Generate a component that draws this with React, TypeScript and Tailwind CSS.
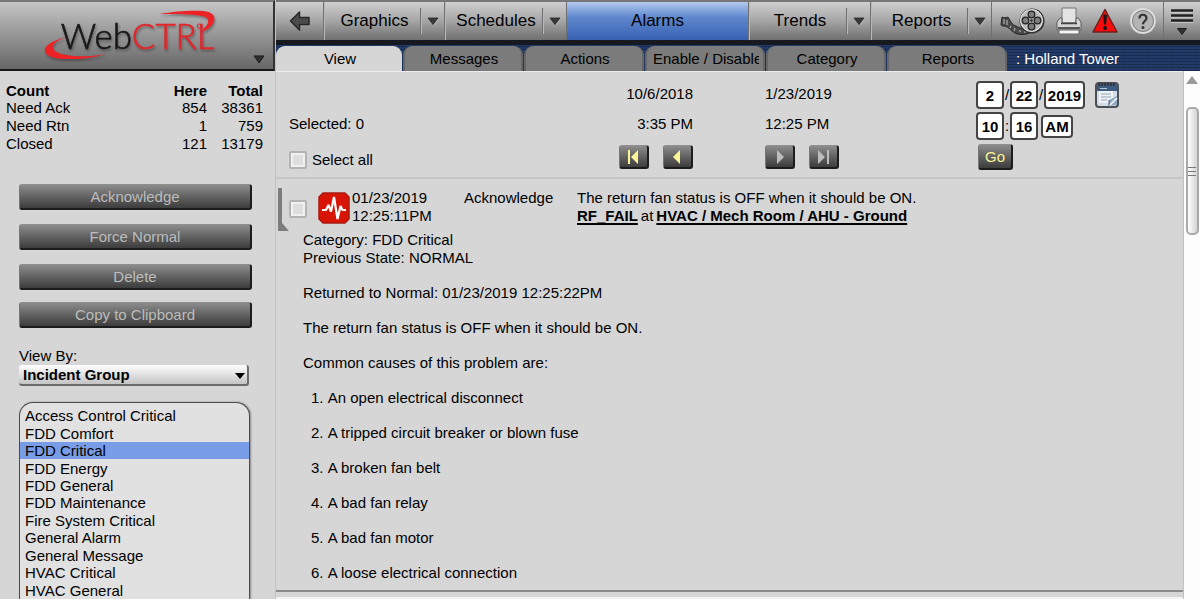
import { useState } from 'react';
import clsx from 'clsx';

const NAV_GRADIENT = 'bg-linear-to-b from-[#cfcfcf] via-[#a5a5a5] to-[#707070]';
const DARK_BUTTON =
  'flex items-center justify-center rounded-[3px] border-t border-r-2 border-b-2 border-l border-t-[#8f8f8f] border-r-[#1c1c1c] border-b-[#1c1c1c] border-l-[#777] bg-linear-to-b from-[#8c8c8c] to-[#3d3d3d]';

const counts = [
  { label: 'Need Ack', here: 854, total: 38361 },
  { label: 'Need Rtn', here: 1, total: 759 },
  { label: 'Closed', here: 121, total: 13179 },
];

const groups = [
  'Access Control Critical',
  'FDD Comfort',
  'FDD Critical',
  'FDD Energy',
  'FDD General',
  'FDD Maintenance',
  'Fire System Critical',
  'General Alarm',
  'General Message',
  'HVAC Critical',
  'HVAC General',
];

const tabs = ['View', 'Messages', 'Actions', 'Enable / Disable', 'Category', 'Reports'];

const causes = [
  'An open electrical disconnect',
  'A tripped circuit breaker or blown fuse',
  'A broken fan belt',
  'A bad fan relay',
  'A bad fan motor',
  'A loose electrical connection',
];

function Caret() {
  return (
    <svg width="12" height="9" viewBox="0 0 12 9" aria-hidden="true">
      <path d="M1 1h10L6 7.5z" fill="#3a3a3a" stroke="#262626" strokeWidth="0.8" />
      <path d="M7 8.5 11.5 2" stroke="#c8c8c8" strokeWidth="0.6" />
    </svg>
  );
}

function Logo() {
  return (
    <svg className="h-full w-full" viewBox="0 0 274 67" aria-label="WebCTRL">
      <defs>
        <filter id="logo-shadow" x="-10%" y="-20%" width="120%" height="150%">
          <feDropShadow dx="1" dy="2" stdDeviation="1" floodColor="#222" floodOpacity="0.45" />
        </filter>
      </defs>
      <g filter="url(#logo-shadow)">
        <path
          d="M66 35C52 39 44 44 45 49c1 6 13 9 27 8 14 0 24-2 35-5-13 2-23 3-33 2-13-1-20-4-21-8-1-4 4-7 13-11z"
          fill="#ec2027"
        />
        <path
          d="M160 12c16-3 34-4 44-3 8 1 12 4 11 9-1 5-6 10-15 13 6-5 9-9 9-12 0-4-5-5-13-6-10-1-22-1-36-1z"
          fill="#ec2027"
        />
        <text x="61" y="47" fontFamily="Lato, 'Open Sans', sans-serif" fontSize="35" fontWeight="300" strokeWidth="0.6">
          <tspan fill="#151515" stroke="#151515">Web</tspan>
          <tspan fill="#e0262c" stroke="#e0262c">CTRL</tspan>
        </text>
        <circle cx="200" cy="24" r="2" fill="none" stroke="#e0262c" strokeWidth="1" />
      </g>
      <path d="M255 54h10l-5 7z" fill="#2f2f2f" stroke="#1d1d1d" />
    </svg>
  );
}

function FilmIcon() {
  return (
    <svg width="46" height="30" viewBox="0 0 46 30" aria-hidden="true">
      <path d="M2 11c2 1 4 1 6 0 2 3 4 8 8 9 5 3 10 4 16 3v3c-9 4-15 3-20-1-3-3-5-5-9-5-1 0-1 0-2-1z" fill="#4a4a4a" stroke="#262626" />
      <path d="M4 13v5M7 14v5M11 20l-1 2M15 22l-1 3M20 24v2M25 25v2" stroke="#a5a5a5" strokeWidth="1.300" />
      <circle cx="32" cy="15" r="12.500" fill="#333" />
      <circle cx="31.500" cy="14.500" r="11" fill="#bdbdbd" stroke="#f2f2f2" />
      <g fill="#7c7c7c" stroke="#222" strokeWidth="1.300">
        <circle cx="31.500" cy="8.500" r="3.300" />
        <circle cx="31.500" cy="20.500" r="3.300" />
        <circle cx="25.500" cy="14.500" r="3.300" />
        <circle cx="37.500" cy="14.500" r="3.300" />
      </g>
      <circle cx="31.500" cy="14.500" r="1.300" fill="#222" />
    </svg>
  );
}

function PrinterIcon() {
  return (
    <svg width="26" height="30" viewBox="0 0 26 30" aria-hidden="true">
      <path d="M6 2h14v15H6z" fill="#e3e3e3" stroke="#777" />
      <path d="M4 12h2v5h14v-5h2l3 4v8H1v-8z" fill="#d4d4d4" stroke="#5a5a5a" />
      <path d="M5 17.500h16" stroke="#444" strokeWidth="1.500" />
      <path d="M2 21h22v2H2z" fill="#555" />
      <path d="M3 24h20v4H3z" fill="#f4f4f4" stroke="#666" />
    </svg>
  );
}

function WarningIcon() {
  return (
    <svg width="28" height="28" viewBox="0 0 28 28" aria-hidden="true">
      <path d="M14 2.500 26 25H2z" fill="#f90b0b" stroke="#6b2020" strokeWidth="1.500" strokeLinejoin="round" />
      <path d="M12 9c0-2 4-2 4 0l-1 8.500h-2z" fill="#171717" />
      <circle cx="14" cy="21" r="2" fill="#171717" />
    </svg>
  );
}

function HelpIcon() {
  return (
    <svg width="28" height="28" viewBox="0 0 28 28" aria-hidden="true">
      <circle cx="14.500" cy="14.500" r="12.500" fill="#555" />
      <circle cx="14" cy="14" r="12" fill="#b4b4b4" stroke="#dedede" strokeWidth="2" />
      <circle cx="14" cy="14" r="10.500" fill="none" stroke="#777" strokeWidth="0.800" />
      <path d="M10.500 11.500c0-5 7-4.800 7-.5 0 3-3.500 3-3.500 6.200" fill="none" stroke="#333" strokeWidth="2.200" />
      <circle cx="14" cy="20.500" r="1.500" fill="#333" />
    </svg>
  );
}

function CalendarIcon() {
  return (
    <svg width="24" height="26" viewBox="0 0 24 26" aria-hidden="true">
      <rect x="1" y="1" width="22" height="24" rx="3" fill="#d3dce5" stroke="#4a4f55" strokeWidth="2" />
      <path d="M2 3.500c0-1 1-2 2-2h16c1 0 2 1 2 2V9H2z" fill="#3c5c80" />
      <path d="M3 2.500h18" stroke="#33383e" strokeWidth="3" strokeDasharray="2 1" />
      <path d="M5 6.500h7" stroke="#b6c8da" />
      <path d="M4 9h14v12H4z" fill="#eef2f5" />
      <path d="M6 12h10M6 15h10M6 18h6" stroke="#b2bfcc" strokeWidth="1.300" />
      <path d="M14 24v-6l8-4v9z" fill="#8fa9c4" />
      <path d="m14 24 8-8" stroke="#fff" strokeWidth="1.500" />
      <path d="M14 18v6" stroke="#3c5c80" />
    </svg>
  );
}

function AlarmIcon() {
  return (
    <svg width="32" height="32" viewBox="0 0 32 32" aria-hidden="true">
      <path d="M5 1h22l4 4v22l-4 4H5l-4-4V5z" fill="#d81406" stroke="#a81b10" strokeWidth="1.500" strokeLinejoin="round" />
      <path
        d="M4 18h4l2.500-5 2.500 6.500L16 5l3.500 22 3-13 2 4H28"
        fill="none"
        stroke="#fff"
        strokeWidth="2.200"
        strokeLinejoin="bevel"
      />
    </svg>
  );
}

function NavItem({ label, className }: { label: string; className: string }) {
  return (
    <div className={clsx('flex items-center border-r border-[#707070] shadow-[inset_1px_0_0_#b8b8b8]', className)}>
      <button className="flex-1 pl-[5px] text-center">{label}</button>
      <button
        aria-label={`${label} menu`}
        className="flex h-[26px] w-6 items-center justify-center border-l border-[#6e6e6e] shadow-[inset_1px_0_0_#bababa]"
      >
        <Caret />
      </button>
    </div>
  );
}

function PageButton({ label, path, disabled }: { label: string; path: string; disabled?: boolean }) {
  return (
    <button aria-label={label} disabled={disabled} className={clsx(DARK_BUTTON, 'h-6 w-[30px]')}>
      <svg width="16" height="16" viewBox="0 0 16 16" aria-hidden="true">
        <path d={path} fill={disabled ? '#bdbdbd' : '#fbf596'} />
      </svg>
    </button>
  );
}

function DateField({ label, value, className }: { label: string; value: string; className: string }) {
  return (
    <input
      aria-label={label}
      defaultValue={value}
      className={clsx('rounded-[4px] border-2 border-[#444] bg-white text-center font-bold', className)}
    />
  );
}

const CHECKBOX =
  'size-[18px] shrink-0 appearance-none rounded-[2px] border-2 border-[#b3b3b3] bg-[#dedede] shadow-[inset_0_0_0_2px_#f1f1f1] checked:bg-[#789ce6]';
const LINK = 'font-bold underline decoration-2 underline-offset-2 [text-decoration-skip-ink:none]';

export default function App() {
  const [tab, setTab] = useState('View');
  const [group, setGroup] = useState('FDD Critical');

  return (
    <div className="flex h-screen overflow-hidden bg-[#d6d6d6] font-['Liberation_Sans',Arial,sans-serif] text-[15px] leading-[18px] text-black">
      {/* Left column */}
      <aside className="flex w-[276px] shrink-0 flex-col border-r border-[#c2c2c2]">
        <button
          aria-label="System menu"
          className="h-[71px] w-full shrink-0 border-t-2 border-r-2 border-b-2 border-t-[#777] border-r-[#333] border-b-[#181818] bg-linear-to-b from-[#c6c6c6] to-[#676767]"
        >
          <Logo />
        </button>

        <table className="mt-[11px] mr-3 ml-[6px] h-[70px] shrink-0 leading-[17px]">
          <thead>
            <tr>
              <th className="p-0 text-left">Count</th>
              <th className="w-16 p-0 text-right">Here</th>
              <th className="w-14 p-0 text-right">Total</th>
            </tr>
          </thead>
          <tbody className="text-right">
            {counts.map(row => (
              <tr key={row.label}>
                <td className="p-0 text-left">{row.label}</td>
                <td className="p-0">{row.here}</td>
                <td className="p-0">{row.total}</td>
              </tr>
            ))}
          </tbody>
        </table>

        <div className="mt-8 flex flex-col gap-[14px] pr-[23px] pl-[19px] text-[#bcbcbc]">
          <button className={clsx(DARK_BUTTON, 'h-[26px]')}>Acknowledge</button>
          <button className={clsx(DARK_BUTTON, 'h-[26px]')}>Force Normal</button>
          <button className={clsx(DARK_BUTTON, 'h-[26px]')}>Delete</button>
        </div>
        <div className="mt-3 flex flex-col pr-[23px] pl-[19px] text-[#bcbcbc]">
          <button className={clsx(DARK_BUTTON, 'h-[26px]')}>Copy to Clipboard</button>
        </div>

        <div className="mt-[19px] flex flex-col pr-[26px] pl-[19px]">
          <label htmlFor="view-by">View By:</label>
          <div className="relative">
            <select
              id="view-by"
              className="h-[21px] w-full appearance-none rounded-[3px] border-r-2 border-b-2 border-[#6b6b6b] bg-linear-to-b from-white to-[#c4c4c4] pl-1 font-bold"
            >
              <option>Incident Group</option>
            </select>
            <svg className="pointer-events-none absolute top-2 right-1" width="10" height="6" aria-hidden="true">
              <path d="M0 0h10L5 6z" fill="#000" />
            </svg>
          </div>
        </div>

        <ul className="mt-4 mr-[25px] ml-[19px] flex min-h-0 flex-1 flex-col rounded-t-[14px] border border-b-0 border-[#4c4c4c] bg-[#e1e1e1] pt-1 shadow-[1px_0_2px_#888]">
          {groups.map(name => (
            <li key={name} className="flex min-h-[17px] flex-1">
              <button
                onClick={() => setGroup(name)}
                className={clsx('w-full pl-[5px] text-left leading-[17px]', group === name && 'bg-[#789ce6]')}
              >
                {name}
              </button>
            </li>
          ))}
        </ul>
      </aside>

      <div className="flex min-w-0 flex-1 flex-col">
        {/* Main navigation */}
        <nav className={clsx('flex h-10 shrink-0 border-t-2 border-[#777] text-[17px]', NAV_GRADIENT)}>
          <button aria-label="Back" className="flex w-12 items-center justify-center border-r border-[#707070]">
            <svg width="22" height="22" viewBox="0 0 22 22" aria-hidden="true">
              <path
                d="M1.500 11 10.500 2v5.500H20v7h-9.500V20z"
                fill="#4b4b4b"
                stroke="#282828"
                strokeWidth="1.500"
                strokeLinejoin="round"
              />
            </svg>
          </button>
          <NavItem label="Graphics" className="w-[121px]" />
          <NavItem label="Schedules" className="w-[122px]" />
          <button className="flex-1 border-r border-[#707070] bg-linear-to-b from-[#b4c9ec] via-[#5f88ce] via-40% to-[#3861b2]">
            Alarms
          </button>
          <NavItem label="Trends" className="w-[122px]" />
          <NavItem label="Reports" className="w-[121px]" />
          <div className="flex w-[172px] items-center justify-between border-r border-[#707070] pr-[6px] pl-2">
            <button aria-label="Trace"><FilmIcon /></button>
            <button aria-label="Print"><PrinterIcon /></button>
            <button aria-label="System alarms"><WarningIcon /></button>
            <button aria-label="Help"><HelpIcon /></button>
          </div>
          <button aria-label="Menu" className="flex w-9 items-center justify-center">
            <svg width="24" height="28" viewBox="0 0 24 28" aria-hidden="true">
              <path d="M1 3.500h22M1 8.500h22M1 13.500h22" stroke="#222" strokeWidth="2.400" />
              <path d="M1 5.500h22M1 10.500h22M1 15.500h22" stroke="#ccc" strokeWidth="0.800" />
              <path d="M7.500 21.500h9l-4.500 6z" fill="#333" stroke="#1d1d1d" />
            </svg>
          </button>
        </nav>

        {/* Tabs */}
        <div className="flex h-[31px] shrink-0 items-end border-t-[5px] border-[#161a20] bg-[#233c6b] bg-[repeating-linear-gradient(0deg,#1a2c50_0_1px,transparent_1px_3px),repeating-linear-gradient(90deg,#1f3660_0_1px,transparent_1px_3px)]">
          {tabs.map(name => (
            <button
              key={name}
              onClick={() => setTab(name)}
              className={clsx(
                'mr-px h-[25px] rounded-t-[9px] border-x-2 pt-px pr-1 pl-[5px] whitespace-nowrap',
                tab === name
                  ? 'w-[126px] border-[#d6d6d6] bg-[#d6d6d6]'
                  : 'w-[120px] border-[#666] bg-[#7b7b7b]'
              )}
            >
              <span className="block overflow-hidden pl-px">{name}</span>
            </button>
          ))}
          <h1 className="self-center pt-px pl-2 text-white">: Holland Tower</h1>
        </div>

        <div className="flex min-h-0 flex-1">
          <main className="min-w-0 flex-1 overflow-hidden border-t border-[#ececec]">
            {/* Filter bar */}
            <section className="flex h-[107px] border-b-2 border-[#c6c6c6] pl-[13px]">
              <div className="flex w-[330px] flex-col justify-end gap-[18px] pb-2">
                <p>Selected: 0</p>
                <label className="flex items-center gap-[5px]">
                  <input type="checkbox" className={CHECKBOX} />
                  Select all
                </label>
              </div>
              <div className="flex w-[74px] flex-col items-end gap-3 pt-[13px]">
                <span>10/6/2018</span>
                <span>3:35 PM</span>
                <div className="flex w-full justify-between">
                  <PageButton label="First page" path="M2 1h2v14H2zM12 1v14L5 8z" />
                  <PageButton label="Previous page" path="M10 1v14L3 8z" />
                </div>
              </div>
              <div className="ml-[72px] flex w-[74px] flex-col gap-3 pt-[13px]">
                <span>1/23/2019</span>
                <span>12:25 PM</span>
                <div className="flex w-full justify-between">
                  <PageButton label="Next page" path="M5 1v14l7-7z" disabled />
                  <PageButton label="Last page" path="M2 1v14l7-7zM11 1h2v14h-2z" disabled />
                </div>
              </div>
              <div className="ml-auto flex w-[207px] flex-col pt-[9px]">
                <div className="flex items-center">
                  <DateField label="Month" value="2" className="h-7 w-7" />
                  <span className="w-[6px] text-center">/</span>
                  <DateField label="Day" value="22" className="h-7 w-7" />
                  <span className="w-[6px] text-center">/</span>
                  <DateField label="Year" value="2019" className="h-7 w-[41px]" />
                  <button aria-label="Pick a date" className="ml-[10px]">
                    <CalendarIcon />
                  </button>
                </div>
                <div className="mt-[3px] flex items-center">
                  <DateField label="Hour" value="10" className="h-7 w-7" />
                  <span className="w-[6px] text-center">:</span>
                  <DateField label="Minute" value="16" className="h-7 w-7" />
                  <DateField label="AM or PM" value="AM" className="ml-[3px] h-[23px] w-8" />
                </div>
                <button className={clsx(DARK_BUTTON, 'mt-1 ml-[2px] h-[26px] w-[35px] text-[#fbf596]')}>Go</button>
              </div>
            </section>

            {/* Alarm entry */}
            <article className="border-b-2 border-[#8b8b8b]">
              <div className="flex pt-[9px] pl-[2px]">
                <svg className="shrink-0" width="11" height="43" aria-hidden="true">
                  <path d="M0 0h4v35l7 8H0z" fill="#7d7d7d" />
                </svg>
                <input type="checkbox" aria-label="Select alarm" className={clsx(CHECKBOX, 'mt-3')} />
                <div className="mt-1 ml-[11px] shrink-0">
                  <AlarmIcon />
                </div>
                <div className="ml-[2px] w-28 shrink-0 pt-px">
                  <p>01/23/2019</p>
                  <p>12:25:11PM</p>
                </div>
                <p className="w-[113px] shrink-0 pt-px">Acknowledge</p>
                <div className="pt-px">
                  <p>The return fan status is OFF when it should be ON.</p>
                  <p className="flex gap-[3px]">
                    <a href="#rf-fail" className={LINK}>RF_FAIL</a>
                    <span>at</span>
                    <a href="#ahu" className={LINK}>HVAC / Mech Room / AHU - Ground</a>
                  </p>
                </div>
              </div>
              <div className="pl-[27px]">
                <p>Category: FDD Critical</p>
                <p className="mb-2">Previous State: NORMAL</p>
                <p className="leading-[35px]">Returned to Normal: 01/23/2019 12:25:22PM</p>
                <p className="leading-[35px]">The return fan status is OFF when it should be ON.</p>
                <p className="leading-[35px]">Common causes of this problem are:</p>
                <ol className="list-inside list-decimal pl-2 leading-[35px]">
                  {causes.map(cause => (
                    <li key={cause}>{cause}</li>
                  ))}
                </ol>
              </div>
            </article>
            <div className="mt-[5px] border-t-2 border-[#f4f4f4]" />
          </main>

          {/* Scrollbar */}
          <div className="flex w-[17px] flex-col items-center border-l border-[#c0c0c0] bg-[#fdfdfd]">
            <svg className="mt-[5px] shrink-0" width="12" height="8" aria-hidden="true">
              <path d="M6 0l6 8H0z" fill="#9a9a9a" />
            </svg>
            <div className="mt-[23px] flex h-32 w-[13px] flex-col items-center justify-center gap-[3px] rounded-[5px] border-2 border-[#a9a9a9] bg-linear-to-r from-white to-[#d4d4d4]">
              <span className="h-px w-2 bg-[#777]" />
              <span className="h-px w-2 bg-[#777]" />
              <span className="h-px w-2 bg-[#777]" />
            </div>
          </div>
        </div>
      </div>
    </div>
  );
}
